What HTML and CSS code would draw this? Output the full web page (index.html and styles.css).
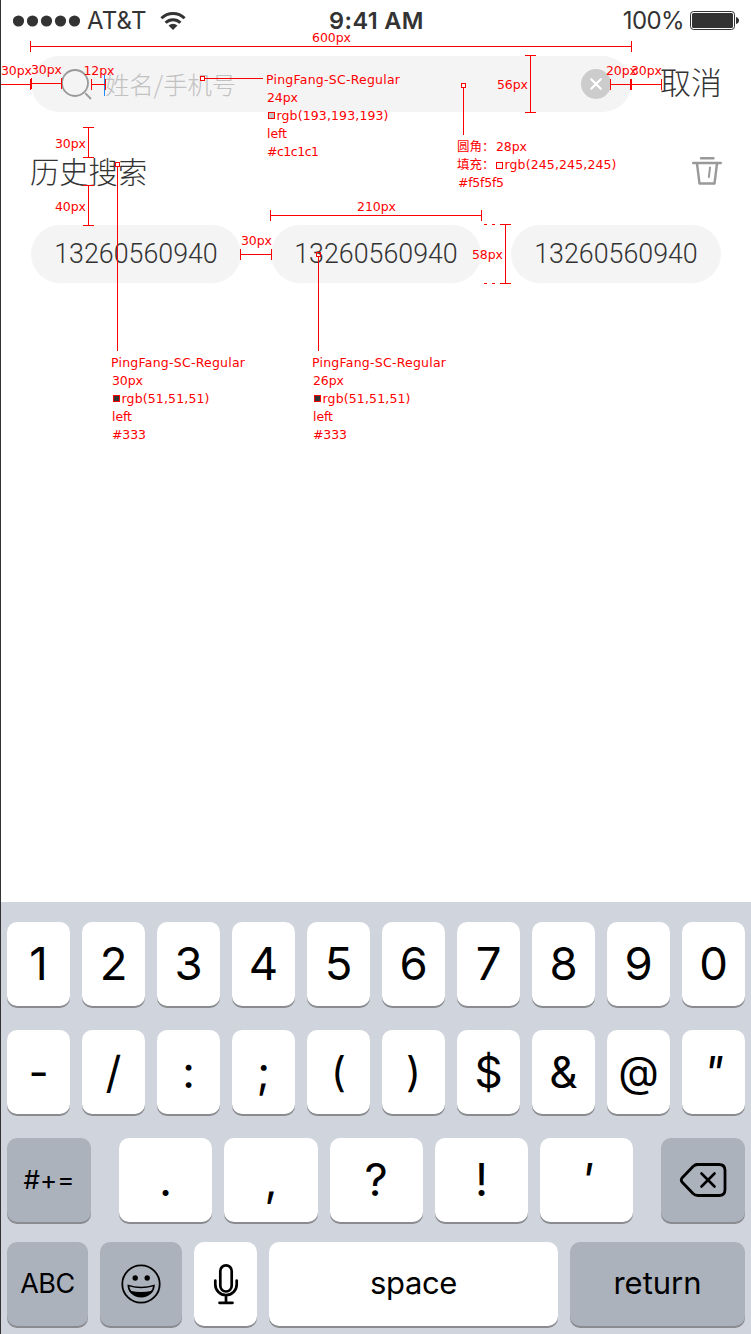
FILE: index.html
```html
<!DOCTYPE html>
<html lang="zh-CN">
<head>
<meta charset="utf-8">
<title>搜索</title>
<link rel="stylesheet" href="styles.css">
</head>
<body>
<div class="screen">
  <header class="status">
    <div class="carrier">
      <svg width="68" height="12" viewBox="0 0 68 12"><g fill="#333"><circle cx="5.5" cy="6" r="5.6"/><circle cx="19.5" cy="6" r="5.6"/><circle cx="33.5" cy="6" r="5.6"/><circle cx="47.5" cy="6" r="5.6"/><circle cx="61.5" cy="6" r="5.6"/></g></svg>
      <span class="operator">AT&amp;T</span>
      <svg class="wifi" width="26" height="20" viewBox="0 0 26 20"><g fill="none" stroke="#333" stroke-width="3"><path d="M1.4 7.3A16.6 16.6 0 0 1 24.6 7.3"/><path d="M5.6 11.7A10.6 10.6 0 0 1 20.4 11.7"/></g><path d="M8.5 14.5Q13 11.1 17.5 14.5L13 19Z" fill="#333"/></svg>
    </div>
    <div class="clock">9:41 AM</div>
    <div class="power">
      <span class="percent">100%</span>
      <svg width="50" height="20" viewBox="0 0 50 20"><rect x=".5" y=".5" width="44" height="18" rx="3" fill="#fff" stroke="#333"/><rect x="2" y="2" width="41" height="15" rx="1.5" fill="#333"/><path d="M46 6Q49 7 49 9.500Q49 12 46 13Z" fill="#333"/></svg>
    </div>
  </header>

  <div class="search-row">
    <div class="search-box">
      <svg class="lens" width="32" height="32" viewBox="0 0 32 32"><g fill="none" stroke="#999" stroke-width="1.8"><circle cx="14" cy="14" r="13"/><path d="M24.200 24.200L30 30"/></g></svg>
      <span class="caret"></span>
      <span class="placeholder">姓名/手机号</span>
      <svg class="clear" width="30" height="30" viewBox="0 0 30 30"><circle cx="15" cy="15" r="15" fill="#ccc"/><path d="M10.200 10.200L19.800 19.800M19.800 10.200L10.200 19.800" stroke="#fff" stroke-width="2.200" stroke-linecap="round"/></svg>
    </div>
    <span class="cancel">取消</span>
  </div>

  <div class="history-head">
    <h1 class="history-title">历史搜索</h1>
    <svg width="30" height="30" viewBox="0 0 30 30"><g fill="none" stroke="#999" stroke-width="2.400" stroke-linecap="round" stroke-linejoin="round"><path d="M9 2.200H21.500M1.200 7H28.800M5 7.500L7.500 27.500H22.500L25 7.500"/><path d="M18 11.500L16.900 21" stroke-width="2"/></g></svg>
  </div>
  <div class="history">
    <span class="chip">13260560940</span>
    <span class="chip">13260560940</span>
    <span class="chip">13260560940</span>
  </div>

  <div class="keyboard">
    <div class="row row-ten">
      <span class="key">1</span><span class="key">2</span><span class="key">3</span><span class="key">4</span><span class="key">5</span><span class="key">6</span><span class="key">7</span><span class="key">8</span><span class="key">9</span><span class="key">0</span>
    </div>
    <div class="row row-ten row-marks">
      <span class="key">-</span><span class="key">/</span><span class="key">:</span><span class="key">;</span><span class="key paren">(</span><span class="key paren">)</span><span class="key">$</span><span class="key">&amp;</span><span class="key at">@</span><span class="key slanted">"</span>
    </div>
    <div class="row row-five">
      <span class="key dark symbols">#+=</span>
      <span class="key">.</span><span class="key">,</span><span class="key">?</span><span class="key">!</span><span class="key slanted">'</span>
      <span class="key dark erase"><svg width="48" height="36" viewBox="0 0 48 36"><g fill="none" stroke="#000" stroke-width="2.800" stroke-linejoin="round"><path d="M16.500 2.500H40Q46 2.500 46 8.500V27.500Q46 33.500 40 33.500H19Q16 33.500 14 31.500L3 20Q1.500 18 3 16L14 4.500Q16 2.500 19 2.500"/><path d="M22.500 11.500L35.500 24.500M35.500 11.500L22.500 24.500" stroke-linecap="round" stroke-width="2.600"/></g></svg></span>
    </div>
    <div class="row row-space">
      <span class="key dark abc">ABC</span>
      <span class="key dark face"><svg width="40" height="40" viewBox="0 0 40 40"><circle cx="20" cy="20" r="18.700" fill="none" stroke="#000" stroke-width="1.800"/><circle cx="14.200" cy="14" r="2.700"/><circle cx="26.200" cy="14" r="2.700"/><path d="M6.500 20.500Q20 25 33.800 20.500C34 28 28 33.500 20.200 33.500S6.300 28 6.500 20.500Z"/><path d="M8.300 22.500Q20 26 32 22.500Q31.500 25.500 30 27Q20 29 10.300 27Q8.800 25 8.300 22.500Z" fill="#acb2bc"/></svg></span>
      <span class="key"><svg width="26" height="42" viewBox="0 0 26 42"><g fill="none" stroke="#000" stroke-width="2.700" stroke-linecap="round"><rect x="7.300" y="2.300" width="11.400" height="26.200" rx="5.700"/><path d="M2.300 17.500V21.500A10.700 10.700 0 0 0 23.700 21.500V17.500M13 32.500V39.500M6.500 39.800H19.500"/></g></svg></span>
      <span class="key word">space</span>
      <span class="key dark word ret">return</span>
    </div>
  </div>

  <svg class="specs" width="751" height="460" viewBox="0 0 751 460">
    <g class="rule">
      <path d="M30.500 41V52M30.500 46.500H631.500M631.500 41V52"/>
      <path d="M0.500 79V90M0 84.500H30.500M30.500 79V90M31.500 78V89M31 83.500H61.500M61.500 78V89"/>
      <path d="M91.500 79V90M91 84.500H105M105.500 79V90"/>
      <path d="M205 78.500H263"/>
      <path d="M463.500 88V135M525 55.500H536M530.500 55V112M525 112.500H536"/>
      <path d="M610.500 79V90M610 84.500H661M630.500 79V90M631.500 79V90M661.500 79V90"/>
      <path d="M83 127.500H94M88.500 127V157M83 157.500H94"/>
      <path d="M83 185.500H94M88.500 185V225M83 225.500H94"/>
      <path d="M117.500 167V351M318.500 257V351"/>
      <path d="M240.500 249V260M240 254.500H272M271.500 249V260"/>
      <path d="M270.500 210V221M270 215.500H482M481.500 210V221"/>
      <path d="M484 224.500H487M492 224.500H495M500 224.500H511M505.500 224V284M484 283.500H487M492 283.500H495M500 283.500H511"/>
      <rect x="200.500" y="76.500" width="4" height="4" fill="#fff"/>
      <rect x="461.500" y="83.500" width="4" height="4" fill="#fff"/>
      <rect x="115.500" y="162.500" width="4" height="4" fill="#fff"/>
      <rect x="316.500" y="252.500" width="4" height="4"/>
      <rect x="268.500" y="112.500" width="6" height="6" fill="#c1c1c1"/>
      <rect x="496.500" y="162.500" width="6" height="6" fill="#f5f5f5"/>
      <rect x="113.500" y="395.500" width="6" height="6" fill="#333"/>
      <rect x="314.500" y="395.500" width="6" height="6" fill="#333"/>
    </g>
    <g class="note">
      <text x="312" y="42" textLength="39">600px</text>
      <text x="1" y="75" textLength="31">30px</text>
      <text x="31" y="74" textLength="31">30px</text>
      <text x="83.500" y="75" textLength="31">12px</text>
      <text x="55" y="148" textLength="31">30px</text>
      <text x="55" y="211" textLength="31">40px</text>
      <text x="606" y="75" textLength="31">20px</text>
      <text x="631" y="75" textLength="31">30px</text>
      <text x="497" y="89" textLength="31">56px</text>
      <text x="357" y="211" textLength="39">210px</text>
      <text x="241" y="245" textLength="31">30px</text>
      <text x="472" y="259" textLength="31">58px</text>
      <text x="266" y="84" textLength="134">PingFang-SC-Regular</text>
      <text x="267" y="102" textLength="31">24px</text>
      <text x="276.500" y="120" textLength="112">rgb(193,193,193)</text>
      <text x="267" y="138" textLength="20">left</text>
      <text x="267" y="156" textLength="52">#c1c1c1</text>
      <text x="457" y="151" class="cn">圆角：</text>
      <text x="496" y="151" textLength="31">28px</text>
      <text x="457" y="169" class="cn">填充：</text>
      <text x="504.500" y="169" textLength="112">rgb(245,245,245)</text>
      <text x="458" y="187" textLength="46">#f5f5f5</text>
      <text x="111" y="367" textLength="134">PingFang-SC-Regular</text>
      <text x="112" y="385" textLength="31">30px</text>
      <text x="121.500" y="403" textLength="88">rgb(51,51,51)</text>
      <text x="112" y="421" textLength="20">left</text>
      <text x="112" y="439" textLength="34">#333</text>
      <text x="312" y="367" textLength="134">PingFang-SC-Regular</text>
      <text x="313" y="385" textLength="31">26px</text>
      <text x="322.500" y="403" textLength="88">rgb(51,51,51)</text>
      <text x="313" y="421" textLength="20">left</text>
      <text x="313" y="439" textLength="34">#333</text>
    </g>
  </svg>
</div>
</body>
</html>
```
FILE: styles.css
```css
* { box-sizing: border-box; }
body { margin: 0; background: #fff; }
svg { display: block; flex: none; }

.screen {
  position: relative;
  width: 751px;
  height: 1334px;
  border-left: 1px solid #333;
  display: flex;
  flex-direction: column;
  overflow: hidden;
  color: #333;
  font-family: Inter, "Noto Sans CJK SC", sans-serif;
}

.status {
  height: 56px;
  padding: 0 11px 15px 12px;
  display: grid;
  grid-template-columns: 1fr auto 1fr;
  align-items: center;
  font-size: 24px;
  line-height: 30px;
}
.carrier, .power { display: flex; align-items: center; }
.operator { margin-left: 6px; font-size: 24px; letter-spacing: 0.2px; }
.wifi { margin-left: 13px; }
.clock { font-weight: 600; font-size: 23.500px; letter-spacing: 0.4px; }
.power { justify-content: flex-end; gap: 6px; }
.percent { font-size: 24px; letter-spacing: -0.600px; }

.search-row { display: flex; align-items: center; height: 56px; padding-left: 30px; }
.search-box {
  width: 600px;
  height: 56px;
  padding: 0 20px 0 30px;
  border-radius: 28px;
  background: #f4f4f4;
  display: flex;
  align-items: center;
}
.lens { margin-top: 1px; }
.caret { width: 1px; height: 21px; margin: 2px 0 0 11px; background: #1b8df0; }
.placeholder {
  flex: 1;
  color: #c1c1c1;
  font: 300 24.300px/36px "Noto Sans CJK SC", sans-serif;
}
.cancel {
  margin-left: 29px;
  margin-top: -6px;
  font: 300 31px/44px "Noto Sans CJK SC", sans-serif;
}

.history-head {
  height: 113px;
  padding: 4px 29px 0 29px;
  display: flex;
  align-items: center;
  justify-content: space-between;
}
.history-title { margin: -2px 0 0; font: 300 29.300px/44px "Noto Sans CJK SC", sans-serif; }
.history { display: flex; gap: 30px; padding-left: 30px; }
.chip {
  width: 210px;
  height: 58px;
  border-radius: 29px;
  background: #f4f4f4;
  text-align: center;
  font: 300 26.800px/59px Roboto, sans-serif;
}

.keyboard {
  height: 432px;
  margin-top: auto;
  padding: 20px 6px 0;
  background: #d0d4dc;
  color: #000;
}
.row { display: grid; height: 84px; margin-bottom: 24px; column-gap: 12px; }
.row-ten { grid-template-columns: repeat(10, 63px); }
.row-five { grid-template-columns: 100px repeat(5, 93.300px) 100px; margin-bottom: 20px; }
.row-space { grid-template-columns: 81px 82px 63px 289px 175px; }
.key {
  display: flex;
  align-items: center;
  justify-content: center;
  height: 84px;
  border-radius: 10px;
  background: #fff;
  box-shadow: 0 2px 0 #898b8f;
  font-size: 45.500px;
  line-height: 56px;
}
.row-marks .key { font-size: 44px; padding-bottom: 1px; }
.row-marks .paren { font-size: 41px; padding-bottom: 0; }
.row-marks .at { font-size: 42px; }
.dark { background: #acb2bc; }
.slanted { font-style: italic; }
.row .symbols { width: 84px; font-size: 26px; }
.erase { width: 84px; margin-left: 16px; }
.abc { font-size: 27px; letter-spacing: -0.500px; }
.face { padding-bottom: 1px; }
.word { font-size: 31px; letter-spacing: -0.400px; padding-bottom: 2px; }
.ret { letter-spacing: 0; }

.specs { position: absolute; left: -1px; top: 0; }
.rule { fill: none; stroke: #f00; stroke-width: 1; shape-rendering: crispEdges; }
.note { fill: #f00; font: 12.500px "DejaVu Sans", Verdana, sans-serif; }
.cn { font: 12.500px "Noto Sans CJK SC", sans-serif; }
```
